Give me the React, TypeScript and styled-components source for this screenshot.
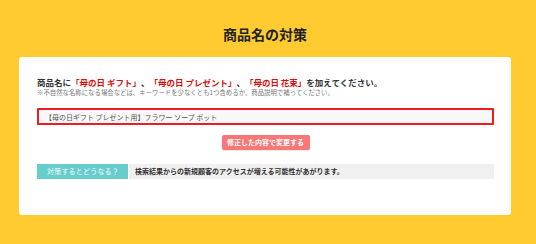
import React from "react";
import styled, { createGlobalStyle } from "styled-components";

const Global = createGlobalStyle`
  html, body {
    margin: 0;
    padding: 0;
    background: #ffcb30;
    min-height: 100%;
  }
  body {
    font-family: "Noto Sans CJK JP", "Noto Sans", sans-serif;
    color: #333;
    text-spacing-trim: space-all;
  }
`;

const Page = styled.div`
  min-height: 244px;
  padding-top: 24px;
  box-sizing: border-box;
`;

const Title = styled.h1`
  margin: 0 0 13px 19px;
  width: 492px;
  text-align: center;
  font-size: 14px;
  line-height: 20px;
  font-weight: 700;
  color: #222;
`;

const Card = styled.div`
  margin-left: 19px;
  width: 492px;
  box-sizing: border-box;
  background: #fff;
  border-radius: 3px;
  padding: 19px 17px 36px 18px;
  display: flex;
  flex-direction: column;
`;

const Lead = styled.p`
  margin: 0;
  font-size: 8.5px;
  line-height: 12px;
  font-weight: 700;
  color: #333;
  white-space: nowrap;
`;

const Red = styled.span`
  color: #d40f0f;
`;

const Note = styled.p`
  margin: 0;
  font-size: 6.4px;
  line-height: 10px;
  color: #777;
  white-space: nowrap;
`;

const Field = styled.div`
  margin-top: 10px;
  height: 17px;
  box-sizing: border-box;
  border: 2px solid #ee1c1c;
  border-radius: 1px;
  background: #f8f8f8;
  display: flex;
  align-items: center;
  padding-left: 6px;
  font-size: 7px;
  color: #555;
  white-space: nowrap;
`;

const ButtonRow = styled.div`
  margin-top: 10px;
  display: flex;
  justify-content: center;
`;

const Button = styled.button`
  width: 88px;
  height: 15px;
  padding: 0;
  border: none;
  border-radius: 2px;
  background: #f87878;
  box-shadow: 0 1px 0 #e9e9e9;
  color: #fff;
  font-family: inherit;
  font-size: 7px;
  font-weight: 700;
  line-height: 15px;
  white-space: nowrap;
`;

const Result = styled.div`
  margin-top: 14px;
  display: flex;
  height: 15px;
  gap: 1px;
`;

const Label = styled.div`
  width: 91px;
  flex: none;
  background: #66cccc;
  color: #f4ffff;
  font-size: 7px;
  line-height: 15px;
  padding-left: 10px;
  box-sizing: border-box;
  letter-spacing: 0.2px;
  white-space: nowrap;
`;

const Value = styled.div`
  flex: 1;
  background: #f0f0f0;
  font-size: 7px;
  line-height: 15px;
  font-weight: 700;
  color: #333;
  padding-left: 6px;
  white-space: nowrap;
`;

export default function App() {
  return (
    <>
      <Global />
      <Page>
        <Title>商品名の対策</Title>
        <Card>
          <Lead>
            商品名に<Red>「母の日 ギフト」</Red>、<Red>「母の日 プレゼント」</Red>、<Red>「母の日 花束」</Red>を加えてください。
          </Lead>
          <Note>
            ※不自然な名称になる場合などは、キーワードを少なくとも1つ含めるか、商品説明で補ってください。
          </Note>
          <Field>【母の日ギフト プレゼント用】フラワー ソープ ポット</Field>
          <ButtonRow>
            <Button>修正した内容で変更する</Button>
          </ButtonRow>
          <Result>
            <Label>対策するとどうなる？</Label>
            <Value>検索結果からの新規顧客のアクセスが増える可能性があがります。</Value>
          </Result>
        </Card>
      </Page>
    </>
  );
}
